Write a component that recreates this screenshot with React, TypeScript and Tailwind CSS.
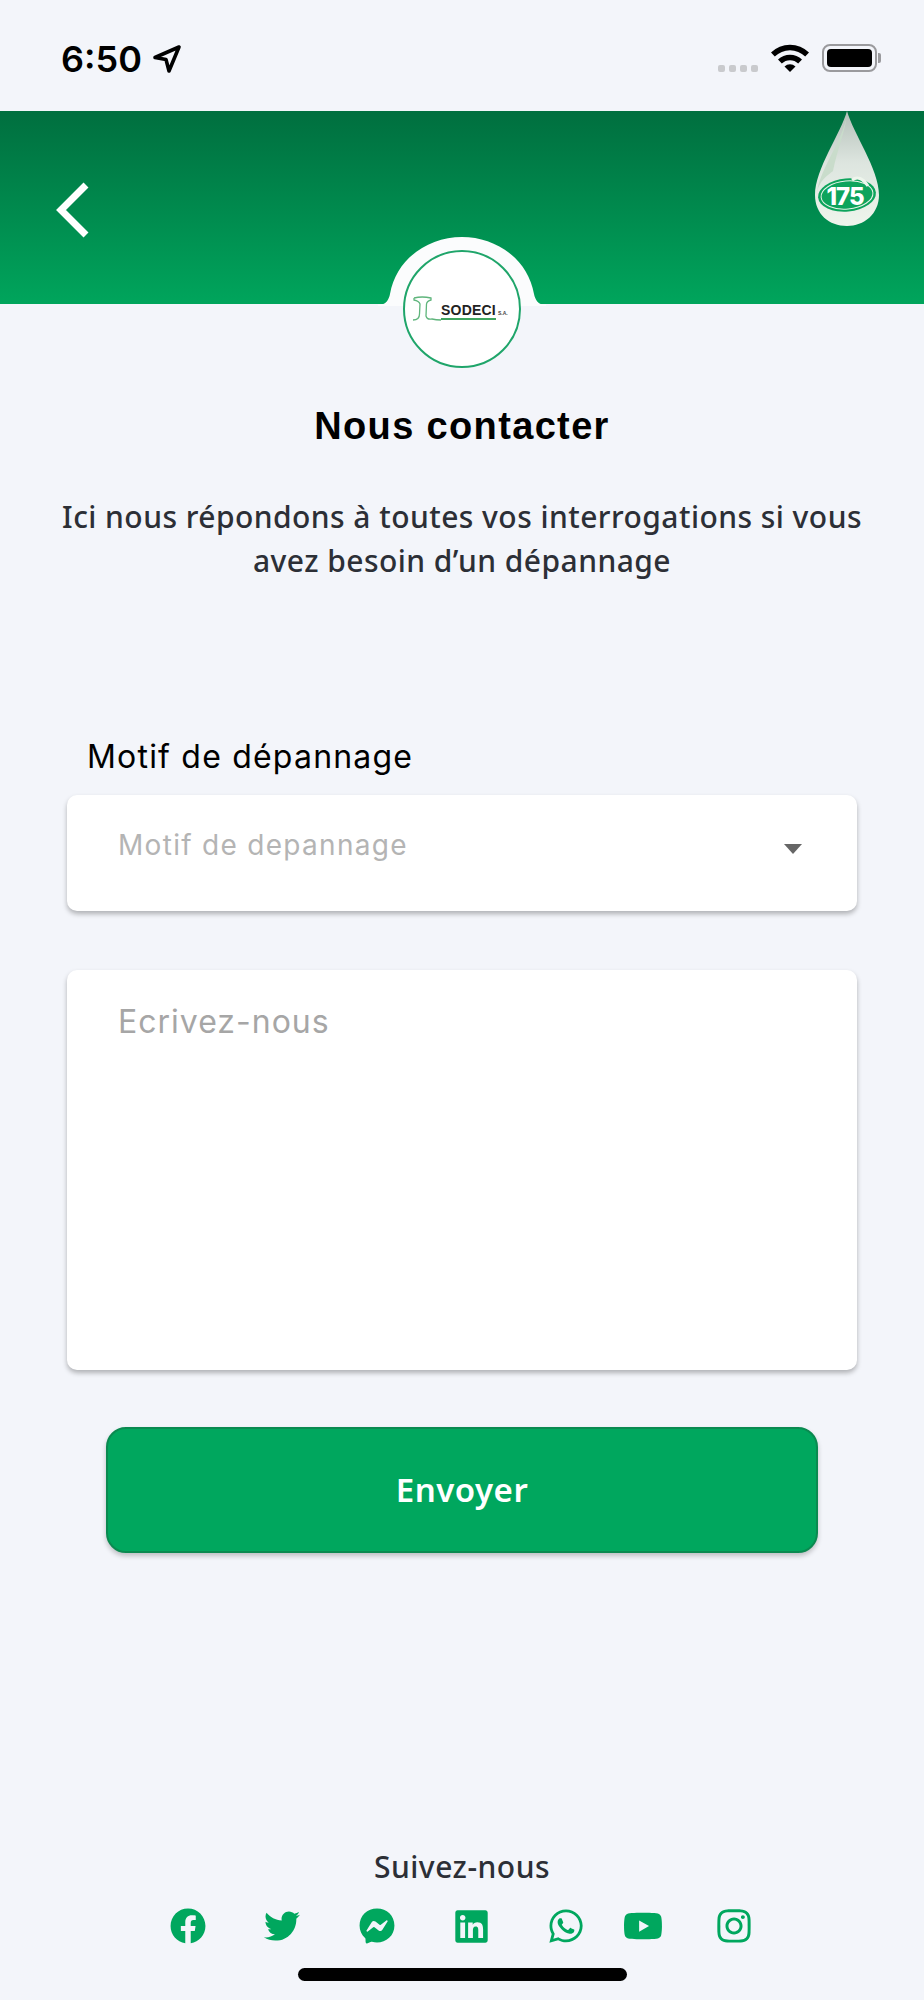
import { FaFacebook, FaTwitter, FaFacebookMessenger, FaLinkedin, FaWhatsapp, FaYoutube, FaInstagram } from "react-icons/fa";

function StatusBar() {
  return (
    <div className="flex h-[111px] items-start justify-between pl-[61px] pr-[43px]">
      <div className="mt-[37px] flex items-center">
        <span className="text-[36px] font-semibold leading-[44px] text-black [font-family:Inter,sans-serif]">6:50</span>
        <svg className="ml-[10px]" width="30" height="30" viewBox="0 0 30 30" fill="none">
          <path d="M27 3 L3 13.5 L14 15.5 L17 27 Z" stroke="#000" strokeWidth="3.6" strokeLinejoin="round" />
        </svg>
      </div>
      <div className="mt-[42px] flex items-start">
        <div className="mt-[23px] flex gap-[4px]">
          <span className="h-[7px] w-[7px] rounded-[2px] bg-[#c9cacd]" />
          <span className="h-[7px] w-[7px] rounded-[2px] bg-[#c9cacd]" />
          <span className="h-[7px] w-[7px] rounded-[2px] bg-[#c9cacd]" />
          <span className="h-[7px] w-[7px] rounded-[2px] bg-[#c9cacd]" />
        </div>
        <svg className="ml-[13px]" width="38" height="30" viewBox="0 0 38 30">
          <path d="M0 10.5 A27 27 0 0 1 38 10.5 L34.2 14.6 A21.6 21.6 0 0 0 3.8 14.6 Z" fill="#000" />
          <path d="M7 17.6 A17 17 0 0 1 31 17.6 L27.2 21.6 A11.5 11.5 0 0 0 10.8 21.6 Z" fill="#000" />
          <path d="M13.5 24.5 A8 8 0 0 1 24.5 24.5 L19 30 Z" fill="#000" />
        </svg>
        <div className="ml-[13px] mt-[2px] flex items-center">
          <div className="flex h-[28px] w-[55px] rounded-[8px] border-2 border-[#9a9a9d] p-[3px]">
            <div className="h-full w-full rounded-[4px] bg-black" />
          </div>
          <div className="ml-[1px] h-[10px] w-[3px] rounded-r-[2px] bg-[#9a9a9d]" />
        </div>
      </div>
    </div>
  );
}

function Drop() {
  return (
    <svg className="absolute left-[813px] top-0" width="68" height="116" viewBox="0 0 68 116">
      <defs>
        <linearGradient id="dropG" x1="0" y1="0" x2="0" y2="1">
          <stop offset="0" stopColor="#b4c0b9" />
          <stop offset="0.45" stopColor="#dde5df" />
          <stop offset="1" stopColor="#eef5ec" />
        </linearGradient>
      </defs>
      <path d="M34 0 C40 22 66 58 66 84 C66 103 51 115 34 115 C16 115 2 103 2 84 C2 58 28 22 34 0 Z" fill="url(#dropG)" />
      <path d="M34 4 C30 30 4 62 4 84 C4 70 18 62 20 60 C24 40 32 20 34 4 Z" fill="#c9dccb" />
      <ellipse cx="34" cy="84" rx="29" ry="16.5" fill="#0da45c" transform="rotate(-5 34 84)" />
      <ellipse cx="34" cy="84" rx="26" ry="14" fill="none" stroke="#e6f3e8" strokeWidth="1" transform="rotate(-5 34 84)" />
      <path d="M39 69 Q47 63 55 75" fill="none" stroke="#eef5ec" strokeWidth="3" />
      <text x="32" y="94" textAnchor="middle" fontSize="24" fontWeight="800" fill="#fff" fontFamily="Inter, sans-serif" letterSpacing="-1">175</text>
    </svg>
  );
}

function Logo() {
  return (
    <>
      <svg className="absolute left-[378px] top-[125px]" width="168" height="70" viewBox="0 0 168 70">
        <path d="M0 68.5 L3 68.5 C8 68.5 11 63 12 58 C18 23 50 1 84 1 C118 1 150 23 156 58 C157 63 160 68.5 165 68.5 L168 68.5 L168 70 L0 70 Z" fill="#fbfcfd" />
      </svg>
      <div className="absolute left-[403px] top-[139px] z-10 h-[118px] w-[118px] rounded-full border-2 border-[#1fa56a] bg-white">
        <svg className="absolute left-[6px] top-[43px]" width="32" height="28" viewBox="0 0 32 28" fill="none">
          <path d="M3 3 Q11 1 20 3 L20 5 Q16 6 15.5 9 L15 21 Q16 25 21 24 Q25 25 30 25 M3 3 L3 5 Q8 6 9 9 L8.5 19 Q8.5 25 2 25" stroke="#5fb57c" strokeWidth="1.3" />
        </svg>
        <span className="absolute left-[36px] top-[50px] text-[14px] font-bold leading-[16px] text-[#222] [font-family:'Liberation_Sans',sans-serif] tracking-[0.2px]">SODECI</span>
        <span className="absolute left-[93px] top-[58px] text-[5px] font-bold leading-[6px] text-[#444] [font-family:'Liberation_Sans',sans-serif]">S.A.</span>
        <div className="absolute left-[36px] top-[66px] h-[2px] w-[55px] bg-[#3fa55f]" />
      </div>
    </>
  );
}

export default function App() {
  return (
    <div className="flex h-[2000px] w-[924px] flex-col overflow-hidden bg-[#f3f5fa] [font-family:'Noto_Sans',sans-serif]">
      <StatusBar />
      <div className="relative h-[193px] shrink-0 bg-gradient-to-b from-[#006f3f] to-[#00a55c]">
        <svg className="absolute left-[53px] top-[70px]" width="38" height="58" viewBox="0 0 38 58" fill="none">
          <path d="M33 4 L8 29 L33 54" stroke="#fff" strokeWidth="7" />
        </svg>
        <Drop />
        <Logo />
      </div>

      <h1 className="mt-[98px] text-center text-[38px] font-bold leading-[48px] tracking-[1.35px] text-black [font-family:'Liberation_Sans',sans-serif]">Nous contacter</h1>

      <p className="mt-[45px] px-[40px] text-center text-[30px] font-medium leading-[44px] tracking-[0.45px] text-[#2c2f36]">
        Ici nous répondons à toutes vos interrogations si vous
        <br />
        avez besoin d’un dépannage
      </p>

      <div className="mt-[154px] px-[67px] [font-family:Inter,sans-serif]">
        <div className="pl-[20px] text-[32px] leading-[40px] tracking-[1.2px] text-black">Motif de dépannage</div>
        <div className="mt-[18px] flex h-[116px] items-start justify-between rounded-[10px] bg-white pl-[51px] pr-[55px] pt-[30px] shadow-[0_3px_5px_rgba(0,0,0,0.28)]">
          <span className="text-[28px] leading-[40px] tracking-[1.3px] text-[#b4b4b4]">Motif de depannage</span>
          <span className="mt-[19px] h-0 w-0 border-x-[9px] border-t-[10px] border-x-transparent border-t-[#666]" />
        </div>
        <div className="mt-[59px] h-[400px] rounded-[10px] bg-white pl-[51px] pt-[30px] shadow-[0_3px_5px_rgba(0,0,0,0.28)]">
          <span className="text-[32px] leading-[44px] tracking-[1px] text-[#a6a6a6]">Ecrivez-nous</span>
        </div>
      </div>

      <div className="mt-[57px] px-[106px]">
        <button className="flex h-[126px] w-full items-center justify-center rounded-[20px] border-2 border-[#0a8a50] bg-[#00a75e] text-[33px] font-semibold tracking-[0.5px] text-white shadow-[0_3px_5px_rgba(0,0,0,0.22)] [font-family:'Noto_Sans',sans-serif]">
          Envoyer
        </button>
      </div>

      <div className="mt-[294px] text-center text-[30px] font-medium leading-[40px] tracking-[0.5px] text-[#2c2f36]">Suivez-nous</div>

      <div className="mt-[20px] flex h-[38px] items-center pl-[170px] text-[#00a75e]">
        <FaFacebook size={36} />
        <FaTwitter size={36} className="ml-[58px]" />
        <FaFacebookMessenger size={36} className="ml-[59px]" />
        <FaLinkedin size={37} className="ml-[58px]" />
        <FaWhatsapp size={38} className="ml-[57px]" />
        <FaYoutube size={40} className="ml-[38px]" />
        <FaInstagram size={38} className="ml-[52px]" />
      </div>

      <div className="mx-auto mt-[23px] h-[13px] w-[329px] rounded-full bg-black" />
    </div>
  );
}
